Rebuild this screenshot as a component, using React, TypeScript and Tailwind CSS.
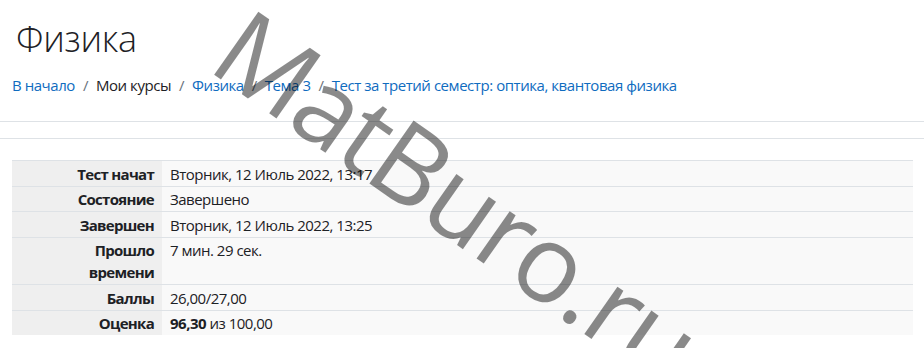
import React from "react";

const rows: { label: React.ReactNode; value: React.ReactNode }[] = [
  { label: "Тест начат", value: "Вторник, 12 Июль 2022, 13:17" },
  { label: "Состояние", value: "Завершено" },
  { label: "Завершен", value: "Вторник, 12 Июль 2022, 13:25" },
  { label: <>Прошло<br />времени</>, value: "7 мин. 29 сек." },
  { label: "Баллы", value: "26,00/27,00" },
  { label: "Оценка", value: <><b className="font-bold">96,30</b> из 100,00</> },
];

export default function App() {
  return (
    <div className="relative w-[924px] h-[348px] overflow-hidden bg-white text-[#1d2125] font-['Open_Sans',sans-serif]">
      <h1 className="pl-[16px] pt-[17px] text-[36px] leading-[43px] font-light tracking-[-0.3px]">Физика</h1>
      <nav className="mt-[14px] pl-[12px] text-[15px] leading-[22px] tracking-[-0.45px] flex">
        <a className="text-[#0f6cbf]">В начало</a>
        <span className="px-[8px] text-[#6a737b]">/</span>
        <span>Мои курсы</span>
        <span className="px-[8px] text-[#6a737b]">/</span>
        <a className="text-[#0f6cbf]">Физика</a>
        <span className="px-[8px] text-[#6a737b]">/</span>
        <a className="text-[#0f6cbf]">Тема 3</a>
        <span className="px-[8px] text-[#6a737b]">/</span>
        <a className="text-[#0f6cbf]">Тест за третий семестр: оптика, квантовая физика</a>
      </nav>
      <div className="mt-[25px] border-t border-[#dee2e6] h-[17px]" />
      <div className="border-t border-[#dee2e6] h-[22px]" />
      <table className="ml-[12px] w-[901px] border-collapse text-[15px] leading-[22px] tracking-[-0.5px]">
        <tbody>
          {rows.map((r, i) => (
            <tr key={i} className="border-t border-[#dee2e6]">
              <th className="w-[150px] bg-[#efefef] text-right font-bold tracking-[-0.7px] pr-[8px] pt-[1.5px] pb-[1px] align-top">
                {r.label}
              </th>
              <td className="bg-[#f9f9f9] pl-[8px] pt-[1.5px] pb-[1px] align-top">{r.value}</td>
            </tr>
          ))}
        </tbody>
      </table>
      <div className="absolute left-[260px] top-[-9px] origin-top-left rotate-[35deg] whitespace-nowrap text-[108px] leading-[108px] tracking-[-2px] text-black/[0.46] font-['Open_Sans',sans-serif] pointer-events-none">
        MatBuro.ru
      </div>
    </div>
  );
}
